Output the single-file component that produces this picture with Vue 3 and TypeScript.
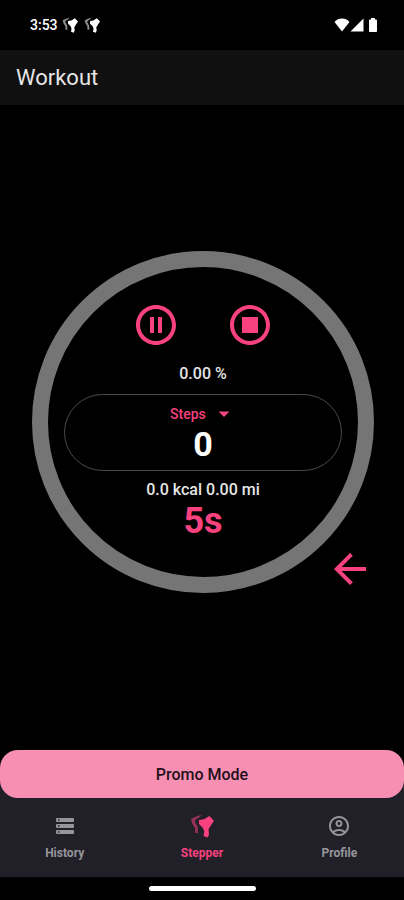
<script setup lang="ts">
import { ref } from 'vue'

type Tab = 'History' | 'Stepper' | 'Profile'

const tabs: Tab[] = ['History', 'Stepper', 'Profile']
const active = ref<Tab>('Stepper')
const metric = ref('Steps')
const metrics = ['Steps']
</script>

<template>
  <div class="app">
    <div class="status">
      <div class="status-left">
        <span>3:53</span>
        <svg v-for="n in 2" :key="n" class="notice" viewBox="0 0 24 24" aria-hidden="true">
          <path class="foot-back" d="M11.700.7 6 2.500 1 5l1.200 4.500L5 14l.2 5H8l-.2-6L5 8l.5-2.500L8.500 4z" />
          <path d="m9 6 5-.8 5.300-3.200L24 6.700l-3 4.500-2.500 4 .5 5.500-1.500 2.800-4-1.500.8-4.500-1.300-3.500L9 10z" />
        </svg>
      </div>
      <div class="status-right">
        <svg class="wifi" viewBox="0 0 16 14" aria-hidden="true">
          <path d="M8 .5C5 .5 2.300 1.600.5 3.900L8 13.500l7.500-9.600C13.700 1.600 11 .5 8 .5z" />
        </svg>
        <svg class="signal" viewBox="0 0 14 14" aria-hidden="true"><path d="M13.500.5v13H.5z" /></svg>
        <svg class="battery" viewBox="0 0 10 14" aria-hidden="true">
          <path d="M3 0h4v1.500h1.200c.5 0 .8.3.8.8v10.900c0 .5-.3.8-.8.8H1.800c-.5 0-.8-.3-.8-.8V2.300c0-.5.3-.8.8-.8H3z" />
        </svg>
      </div>
    </div>

    <header class="bar"><h1>Workout</h1></header>

    <main class="stage">
      <div class="ring">
        <div class="controls">
          <button type="button" aria-label="Pause">
            <svg viewBox="0 0 24 24"><path d="M9 16h2V8H9v8zm3-14C6.480 2 2 6.480 2 12s4.480 10 10 10 10-4.480 10-10S17.520 2 12 2zm0 18c-4.410 0-8-3.590-8-8s3.590-8 8-8 8 3.590 8 8-3.590 8-8 8zm1-4h2V8h-2v8z" /></svg>
          </button>
          <button type="button" aria-label="Stop">
            <svg viewBox="0 0 24 24"><path d="M12 2C6.480 2 2 6.480 2 12s4.480 10 10 10 10-4.480 10-10S17.520 2 12 2zm0 18c-4.410 0-8-3.590-8-8s3.590-8 8-8 8 3.590 8 8-3.590 8-8 8zm4-4H8V8h8v8z" /></svg>
          </button>
        </div>
        <p class="line">0.00 %</p>
        <section class="counter">
          <div class="picker">
            <select v-model="metric" aria-label="Metric">
              <option v-for="m in metrics" :key="m">{{ m }}</option>
            </select>
            <svg viewBox="0 0 24 24" aria-hidden="true"><path d="m6.500 9.500 5.500 5.500 5.500-5.500z" /></svg>
          </div>
          <strong>0</strong>
        </section>
        <p class="line">0.0 kcal 0.00 mi</p>
        <p class="timer">5s</p>
        <button class="back" type="button" aria-label="Back">
          <svg viewBox="0 0 24 24"><path d="M20 11H7.830l5.590-5.590L12 4l-8 8 8 8 1.410-1.410L7.830 13H20v-2z" /></svg>
        </button>
      </div>
    </main>

    <div class="dock">
      <button class="promo" type="button">Promo Mode</button>
      <nav class="tabs">
        <button
          v-for="t in tabs"
          :key="t"
          type="button"
          class="tab"
          :class="{ active: active === t }"
          @click="active = t"
        >
          <svg v-if="t === 'History'" viewBox="0 0 24 24" aria-hidden="true">
            <rect x="3" y="4" width="18" height="4" rx="1" />
            <rect x="3" y="10" width="18" height="4" rx="1" />
            <rect x="3" y="16" width="18" height="4" rx="1" />
            <path class="dot" d="M5 5.300h1.500v1.400H5zM5 11.300h1.500v1.400H5zM5 17.300h1.500v1.400H5z" />
          </svg>
          <svg v-else-if="t === 'Stepper'" viewBox="0 0 24 24" aria-hidden="true">
            <path class="foot-back" d="M11.700.7 6 2.500 1 5l1.200 4.500L5 14l.2 5H8l-.2-6L5 8l.5-2.500L8.500 4z" />
            <path d="m9 6 5-.8 5.300-3.200L24 6.700l-3 4.500-2.500 4 .5 5.500-1.500 2.800-4-1.500.8-4.500-1.300-3.500L9 10z" />
          </svg>
          <svg v-else viewBox="0 0 24 24" aria-hidden="true">
            <path d="M12 2C6.480 2 2 6.480 2 12s4.480 10 10 10 10-4.480 10-10S17.520 2 12 2zM7.350 18.500C8.660 17.560 10.260 17 12 17s3.340.56 4.650 1.500C15.340 19.440 13.740 20 12 20s-3.340-.56-4.650-1.500zm10.790-1.380C16.450 15.800 14.320 15 12 15s-4.450.8-6.140 2.120C4.700 15.730 4 13.950 4 12c0-4.420 3.580-8 8-8s8 3.580 8 8c0 1.950-.7 3.730-1.860 5.120zM12 6c-1.930 0-3.500 1.570-3.500 3.500S10.070 13 12 13s3.500-1.570 3.500-3.500S13.930 6 12 6zm0 5c-.83 0-1.500-.67-1.500-1.500S11.170 8 12 8s1.500.67 1.500 1.500S12.830 11 12 11z" />
          </svg>
          <span>{{ t }}</span>
        </button>
      </nav>
    </div>
    <div class="gesture"><span></span></div>
  </div>
</template>

<style>
body {
  margin: 0;
  background: #000;
}
</style>

<style scoped>
.app {
  display: flex;
  flex-direction: column;
  min-height: 100vh;
  background: #000;
  color: #e6e6e6;
  font-family: Roboto, "Liberation Sans", sans-serif;
}
svg {
  display: block;
  fill: currentColor;
}
button,
select {
  margin: 0;
  padding: 0;
  border: 0;
  background: none;
  color: inherit;
  font: inherit;
  cursor: pointer;
}
h1,
p {
  margin: 0;
}
.status {
  display: flex;
  justify-content: space-between;
  align-items: center;
  height: 50px;
  padding: 0 26px 0 30px;
  color: #fff;
  font-size: 14px;
  font-weight: 500;
}
.status-left {
  display: flex;
  align-items: center;
}
.notice {
  width: 16px;
  height: 16px;
  margin: 0 2px 0 4px;
}
.foot-back {
  opacity: 0.55;
}
.status-right {
  display: flex;
  align-items: center;
}
.wifi {
  width: 16px;
  height: 14px;
}
.signal {
  width: 14px;
  height: 14px;
}
.battery {
  width: 10px;
  height: 14px;
  margin-left: 4px;
}
.bar {
  display: flex;
  align-items: center;
  height: 55px;
  padding: 0 16px;
  background: #101010;
}
.bar h1 {
  font-size: 22px;
  font-weight: 400;
  line-height: 28px;
}
.stage {
  flex: 1;
  display: flex;
  align-items: center;
  justify-content: center;
  padding: 0 30px 12px 32px;
}
.ring {
  position: relative;
  display: flex;
  flex-direction: column;
  align-items: center;
  box-sizing: border-box;
  width: 100%;
  max-width: 420px;
  aspect-ratio: 1;
  padding: 34px 16px 0;
  border: 16px solid #757575;
  border-radius: 50%;
}
.controls {
  display: flex;
  gap: 46px;
  color: #f8417f;
}
.controls svg,
.back svg {
  width: 48px;
  height: 48px;
}
.line {
  padding-top: 13px;
  font-size: 16px;
  font-weight: 500;
  line-height: 24px;
}
.counter {
  display: flex;
  flex-direction: column;
  align-items: center;
  box-sizing: border-box;
  width: 100%;
  margin: 8px 0 -6px;
  padding: 7px 0;
  border: 1px solid #4a4a4a;
  border-radius: 40px;
}
.picker {
  position: relative;
  color: #f8417f;
}
.picker select {
  display: block;
  appearance: none;
  height: 24px;
  padding-right: 30px;
  font-size: 14px;
  font-weight: 500;
}
.picker svg {
  position: absolute;
  top: 0;
  right: 0;
  width: 24px;
  height: 24px;
  pointer-events: none;
}
.counter strong {
  color: #fff;
  font-size: 34px;
  font-weight: 700;
  line-height: 37px;
}
.timer {
  color: #f8417f;
  font-size: 36px;
  font-weight: 700;
  line-height: 38px;
}
.back {
  position: absolute;
  right: -16px;
  bottom: -16px;
  color: #f8417f;
}
.dock {
  background: linear-gradient(#000 24px, #212028 24px);
}
.promo {
  display: block;
  width: 100%;
  height: 48px;
  border-radius: 18px;
  background: #f78fb3;
  color: #24101a;
  font-size: 16px;
  font-weight: 500;
}
.tabs {
  display: grid;
  grid-template-columns: repeat(3, 1fr);
  gap: 8px;
  height: 79px;
  background: #212028;
}
.tab {
  display: flex;
  flex-direction: column;
  align-items: center;
  gap: 7px;
  padding-top: 16px;
  color: #96959a;
  font-size: 12px;
  font-weight: 700;
  line-height: 16px;
}
.tab svg {
  width: 24px;
  height: 24px;
}
.tab.active {
  color: #f8417f;
}
.dot {
  fill: #212028;
}
.gesture {
  display: flex;
  align-items: center;
  justify-content: center;
  height: 23px;
}
.gesture span {
  width: 107px;
  height: 5px;
  border-radius: 3px;
  background: #fff;
}
</style>
